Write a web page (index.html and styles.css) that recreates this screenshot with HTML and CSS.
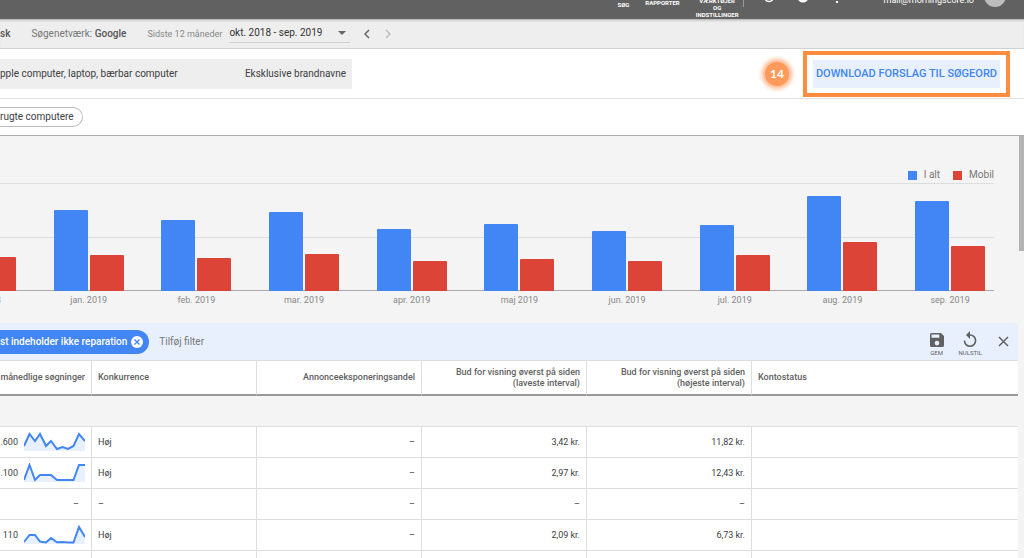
FILE: index.html
```html
<!DOCTYPE html>
<html lang="da">
<head>
    <meta charset="UTF-8">
    <meta name="viewport" content="width=device-width, initial-scale=1.0">
    <title>Søgeordsplanlægning</title>
    <link rel="stylesheet" href="styles.css">
</head>
<body>
    <header class="header">
        <nav class="header-nav">
            <a class="nav-search" href="#search">SØG</a>
            <a class="nav-reports" href="#reports">RAPPORTER</a>
            <a class="nav-tools" href="#tools">VÆRKTØJER<br>OG<br>INDSTILLINGER</a>
        </nav>
        <div class="header-icons">
            <svg width="10" height="10" viewBox="0 0 10 10"><path d="M1 5a4 3.500 0 0 0 8 0" fill="none" stroke="#fff" stroke-width="1.500"/></svg>
            <svg width="12" height="12" viewBox="0 0 12 12"><circle cx="6" cy="6" r="5.500" fill="#fff"/></svg>
            <svg width="10" height="10" viewBox="0 0 10 10"><path d="M4 9h2" stroke="#fff" stroke-width="2"/></svg>
        </div>
        <span class="account">mail@morningscore.io</span>
        <span class="avatar"></span>
    </header>

    <div class="toolbar">
        <span class="strong">sk</span>
        <span class="network">Søgenetværk: <span class="strong">Google</span></span>
        <div class="period">
            <span class="period-label">Sidste 12 måneder</span>
            <button class="period-select">okt. 2018 - sep. 2019
                <svg width="8" height="4" viewBox="0 0 8 4"><path d="M0 0h8L4 4z" fill="#666"/></svg>
            </button>
        </div>
        <button class="icon-button" aria-label="Forrige"><svg width="6" height="10" viewBox="0 0 6 10"><path d="M5 1L1 5l4 4" fill="none" stroke="#666" stroke-width="1.500"/></svg></button>
        <button class="icon-button" aria-label="Næste"><svg width="6" height="10" viewBox="0 0 6 10"><path d="M1 1l4 4-4 4" fill="none" stroke="#bbb" stroke-width="1.500"/></svg></button>
    </div>

    <div class="search-row">
        <div class="search-box">
            <span>pple computer, laptop, bærbar computer</span>
            <span>Eksklusive brandnavne</span>
        </div>
        <div class="download">
            <span class="step">14</span>
            <div class="highlight"><button class="download-button">DOWNLOAD FORSLAG TIL SØGEORD</button></div>
        </div>
    </div>

    <div class="chips-row">
        <button class="chip">rugte computere</button>
    </div>

    <div class="panel">
        <main class="content">
            <section class="chart">
                <div class="legend">
                    <span class="legend-item"><i class="swatch total"></i>I alt</span>
                    <span class="legend-item"><i class="swatch mobile"></i>Mobil</span>
                </div>
                <div class="plot">
                    <div class="month cut"><div class="bars"><div class="bar mobile" style="height: 34px"></div></div><span class="month-label">dec. 2018</span></div>
                    <div class="month"><div class="bars"><div class="bar total" style="height: 81px"></div><div class="bar mobile" style="height: 36px"></div></div><span class="month-label">jan. 2019</span></div>
                    <div class="month"><div class="bars"><div class="bar total" style="height: 71px"></div><div class="bar mobile" style="height: 33px"></div></div><span class="month-label">feb. 2019</span></div>
                    <div class="month"><div class="bars"><div class="bar total" style="height: 79px"></div><div class="bar mobile" style="height: 37px"></div></div><span class="month-label">mar. 2019</span></div>
                    <div class="month"><div class="bars"><div class="bar total" style="height: 62px"></div><div class="bar mobile" style="height: 30px"></div></div><span class="month-label">apr. 2019</span></div>
                    <div class="month"><div class="bars"><div class="bar total" style="height: 67px"></div><div class="bar mobile" style="height: 32px"></div></div><span class="month-label">maj 2019</span></div>
                    <div class="month"><div class="bars"><div class="bar total" style="height: 60px"></div><div class="bar mobile" style="height: 30px"></div></div><span class="month-label">jun. 2019</span></div>
                    <div class="month"><div class="bars"><div class="bar total" style="height: 66px"></div><div class="bar mobile" style="height: 36px"></div></div><span class="month-label">jul. 2019</span></div>
                    <div class="month"><div class="bars"><div class="bar total" style="height: 95px"></div><div class="bar mobile" style="height: 49px"></div></div><span class="month-label">aug. 2019</span></div>
                    <div class="month"><div class="bars"><div class="bar total" style="height: 90px"></div><div class="bar mobile" style="height: 45px"></div></div><span class="month-label">sep. 2019</span></div>
                </div>
            </section>

            <div class="filter-bar">
                <button class="filter-chip">st indeholder ikke reparation
                    <svg width="12" height="12" viewBox="0 0 12 12"><circle cx="6" cy="6" r="6" fill="#fff"/><path d="M3.500 3.500l5 5M8.500 3.500l-5 5" stroke="#4285f4" stroke-width="1.400"/></svg>
                </button>
                <input class="filter-input" type="text" placeholder="Tilføj filter" aria-label="Tilføj filter">
                <button class="tool">
                    <svg width="14" height="14" viewBox="3 3 18 18"><path d="M17 3H5a2 2 0 0 0-2 2v14a2 2 0 0 0 2 2h14a2 2 0 0 0 2-2V7l-4-4zm-5 16a3 3 0 1 1 0-6 3 3 0 0 1 0 6zm3-10H5V5h10v4z" fill="#616161"/></svg>
                    GEM
                </button>
                <button class="tool tool-reset">
                    <svg width="14" height="16" viewBox="4 1 16 20"><path d="M12 5V1L7 6l5 5V7a6 6 0 1 1-6 6H4a8 8 0 1 0 8-8z" fill="#616161"/></svg>
                    NULSTIL
                </button>
                <button class="close" aria-label="Luk"><svg width="11" height="11" viewBox="0 0 11 11"><path d="M1 1l9 9M10 1l-9 9" stroke="#616161" stroke-width="1.500"/></svg></button>
            </div>

            <table class="keywords">
                <colgroup>
                    <col class="col-volume">
                    <col class="col-data">
                    <col class="col-data">
                    <col class="col-data">
                    <col class="col-data">
                    <col>
                </colgroup>
                <thead>
                    <tr>
                        <th class="num">månedlige søgninger</th>
                        <th>Konkurrence</th>
                        <th class="num">Annonceeksponeringsandel</th>
                        <th class="num">Bud for visning øverst på siden (laveste interval)</th>
                        <th class="num">Bud for visning øverst på siden (højeste interval)</th>
                        <th>Kontostatus</th>
                    </tr>
                </thead>
                <tbody>
                    <tr class="group"><td colspan="6"></td></tr>
                    <tr>
                        <td><div class="volume">.600
                            <svg width="61" height="20" viewBox="0 0 61 20"><path class="area" d="M0 14L5.500 2 11 9 16 2 22 14 27 9 33 17 38.500 15 44 17 49.500 14 55 2 61 9V19H0z"/><path class="line" d="M0 14L5.500 2 11 9 16 2 22 14 27 9 33 17 38.500 15 44 17 49.500 14 55 2 61 9"/></svg>
                        </div></td>
                        <td>Høj</td>
                        <td class="num">–</td>
                        <td class="num">3,42 kr.</td>
                        <td class="num">11,82 kr.</td>
                        <td></td>
                    </tr>
                    <tr>
                        <td><div class="volume">.100
                            <svg width="61" height="20" viewBox="0 0 61 20"><path class="area" d="M0 17L5.500 2 11 17 16 12H27L33 17H49.500L55 2H61V19H0z"/><path class="line" d="M0 17L5.500 2 11 17 16 12H27L33 17H49.500L55 2H61"/></svg>
                        </div></td>
                        <td>Høj</td>
                        <td class="num">–</td>
                        <td class="num">2,97 kr.</td>
                        <td class="num">12,43 kr.</td>
                        <td></td>
                    </tr>
                    <tr>
                        <td class="num empty">–</td>
                        <td>–</td>
                        <td class="num">–</td>
                        <td class="num">–</td>
                        <td class="num">–</td>
                        <td></td>
                    </tr>
                    <tr>
                        <td><div class="volume">110
                            <svg width="61" height="20" viewBox="0 0 61 20"><path class="area" d="M0 17L5.500 10H11L16 16.500 22 17.500 27 13 33 17.300 38.500 17 44 17.500H49.500L55 2 61 12V19H0z"/><path class="line" d="M0 17L5.500 10H11L16 16.500 22 17.500 27 13 33 17.300 38.500 17 44 17.500H49.500L55 2 61 12"/></svg>
                        </div></td>
                        <td>Høj</td>
                        <td class="num">–</td>
                        <td class="num">2,09 kr.</td>
                        <td class="num">6,73 kr.</td>
                        <td></td>
                    </tr>
                    <tr><td></td><td></td><td></td><td></td><td></td><td></td></tr>
                </tbody>
            </table>
        </main>
        <div class="scroll-thumb"></div>
    </div>
</body>
</html>
```
FILE: styles.css
```css
* {
    box-sizing: border-box;
}

body {
    margin: 0;
    height: 100vh;
    overflow: hidden;
    font-family: Roboto, "Liberation Sans", sans-serif;
    font-size: 10px;
    line-height: 12px;
    color: #3c4043;
    background-color: #f4f4f4;
}

button,
input {
    margin: 0;
    padding: 0;
    border: none;
    background: none;
    font: inherit;
    color: inherit;
}

button {
    cursor: pointer;
}

svg {
    display: block;
    flex-shrink: 0;
}

/* Header */
.header {
    display: flex;
    align-items: flex-end;
    justify-content: flex-end;
    height: 19px;
    padding-right: 18px;
    overflow: hidden;
    background-color: #616161;
    color: #fff;
}

.header-nav {
    display: flex;
    align-items: flex-end;
    gap: 16px;
    padding-right: 4px;
    border-right: 1px solid #999;
    margin-bottom: 12px;
    height: 16px;
}

.header-nav a {
    font-size: 6px;
    line-height: 7px;
    font-weight: 700;
    text-align: center;
    text-decoration: none;
    color: #fff;
}

.nav-search {
    margin-bottom: -1px;
}

.nav-reports {
    margin-bottom: 1px;
}

.nav-tools {
    margin-bottom: -11px;
}

.header-icons {
    display: flex;
    align-items: flex-end;
    gap: 23px;
    padding: 0 42px 16px 20px;
}

.account {
    padding-bottom: 13px;
    font-size: 9px;
}

.avatar {
    width: 22px;
    height: 22px;
    margin: 0 0 12px 10px;
    border-radius: 50%;
    background-color: #bdbdbd;
}

/* Toolbar */
.toolbar {
    display: flex;
    align-items: center;
    height: 30px;
    border-bottom: 1px solid #d0d0d0;
    background-color: #eee;
    box-shadow: inset 0 3px 3px -2px rgba(0, 0, 0, 0.3);
    color: #777;
}

.strong {
    font-weight: 500;
    color: #555;
}

.network {
    margin: 0 21px;
}

.period {
    display: flex;
    align-items: center;
    gap: 7px;
    margin-right: 14px;
}

.period-label {
    font-size: 9px;
    color: #888;
}

.period-select {
    display: flex;
    align-items: center;
    justify-content: space-between;
    width: 121px;
    padding: 3px 4px 3px 0;
    border-bottom: 1px solid #d0d0d0;
    color: #333;
}

.icon-button {
    margin-right: 15px;
}

/* Search summary */
.search-row {
    display: flex;
    align-items: center;
    justify-content: space-between;
    height: 50px;
    padding-right: 14px;
    border-bottom: 1px solid #e0e0e0;
    background-color: #fff;
}

.search-box {
    display: flex;
    align-items: center;
    justify-content: space-between;
    width: 352px;
    height: 30px;
    padding-right: 6px;
    background-color: #eee;
}

.download {
    display: flex;
    align-items: center;
    gap: 14px;
}

.step {
    width: 24px;
    border-radius: 50%;
    background-color: #ff9a5c;
    box-shadow: 0 0 4px 3px #ffb68a;
    font-family: Lato, sans-serif;
    font-size: 12px;
    line-height: 24px;
    font-weight: 700;
    text-align: center;
    color: #fff;
}

.highlight {
    padding: 5px 6px;
    border: 4px solid #ff8c3f;
}

.download-button {
    height: 28px;
    padding: 0 3px;
    background-color: #e8f0fe;
    font-size: 11px;
    font-weight: 500;
    color: #4285f4;
}

.chips-row {
    display: flex;
    align-items: center;
    height: 37px;
    border-bottom: 1px solid #aaa;
    background-color: #fff;
}

.chip {
    height: 20px;
    padding-right: 8px;
    border: 1px solid #bdbdbd;
    border-left: none;
    border-radius: 0 10px 10px 0;
}

/* Scrolling panel */
.panel {
    display: flex;
    align-items: flex-start;
    justify-content: space-between;
}

.content {
    flex: 1;
    min-width: 0;
}

.scroll-thumb {
    width: 5px;
    height: 115px;
    margin-left: 1px;
    background-color: #b3b3b3;
}

/* Chart */
.chart {
    padding: 33px 24px 17px 0;
}

.legend {
    display: flex;
    justify-content: flex-end;
    gap: 13px;
    margin-bottom: 2px;
    color: #777;
}

.legend-item {
    display: flex;
    align-items: center;
    gap: 7px;
}

.swatch {
    width: 9px;
    height: 9px;
}

.total {
    background-color: #4285f4;
}

.mobile {
    background-color: #db4437;
}

.plot {
    display: flex;
    padding-right: 9px;
    background:
        linear-gradient(#ddd, #ddd) 0 0 / 100% 1px no-repeat,
        linear-gradient(#ddd, #ddd) 0 54px / 100% 1px no-repeat,
        linear-gradient(#aaa, #aaa) 0 107px / 100% 1px no-repeat;
}

.month {
    display: flex;
    flex: 1;
    flex-direction: column;
    align-items: flex-end;
}

.month.cut {
    flex: 0 0 16px;
    width: 16px;
    min-width: 0;
}

.bars {
    display: flex;
    align-items: flex-end;
    justify-content: flex-end;
    gap: 2px;
    width: 70px;
    height: 108px;
}

.bar {
    width: 34px;
    border-radius: 1px 1px 0 0;
}

.month-label {
    width: 70px;
    margin-top: 3px;
    font-size: 9px;
    text-align: center;
    color: #888;
}

/* Filter bar */
.filter-bar {
    display: flex;
    align-items: center;
    height: 38px;
    padding-right: 9px;
    border-bottom: 1px solid #ddd;
    background-color: #e8f0fe;
    color: #616161;
}

.filter-chip {
    display: flex;
    align-items: center;
    gap: 4px;
    height: 24px;
    padding-right: 6px;
    border-radius: 0 12px 12px 0;
    background-color: #4285f4;
    font-weight: 500;
    color: #fff;
}

.filter-input {
    flex: 1;
    min-width: 0;
    margin-left: 10px;
}

.filter-input::placeholder {
    color: #777;
}

.tool {
    display: flex;
    flex-direction: column;
    align-items: center;
    justify-content: flex-end;
    gap: 2px;
    height: 30px;
    font-size: 6px;
    line-height: 8px;
}

.tool-reset {
    margin: 0 16px 0 15px;
}

/* Keyword table */
.keywords {
    width: 100%;
    table-layout: fixed;
    border-collapse: separate;
    border-spacing: 0;
    background-color: #fff;
}

.col-volume {
    width: 92px;
}

.col-data {
    width: 165px;
}

.keywords th,
.keywords td {
    padding: 0 6px;
    border-right: 1px solid #ddd;
    text-align: left;
}

.keywords th {
    height: 35px;
    border-bottom: 2px solid #999;
    font-size: 9px;
    line-height: 11px;
    font-weight: 500;
    color: #616161;
}

.keywords td {
    height: 31px;
    border-bottom: 1px solid #ddd;
    font-size: 9px;
}

.keywords th:first-child {
    padding-left: 0;
    white-space: nowrap;
}

.keywords td:first-child {
    padding-left: 0;
}

.keywords th:last-child,
.keywords td:last-child {
    border-right: none;
}

.keywords .group td {
    background-color: #f4f4f4;
}

.keywords .num {
    text-align: right;
}

.keywords .empty {
    padding-right: 12px;
}

.volume {
    display: flex;
    align-items: center;
    justify-content: flex-end;
    gap: 6px;
}

.area {
    fill: #e8f0fe;
}

.line {
    fill: none;
    stroke: #4285f4;
    stroke-width: 2;
}
```
